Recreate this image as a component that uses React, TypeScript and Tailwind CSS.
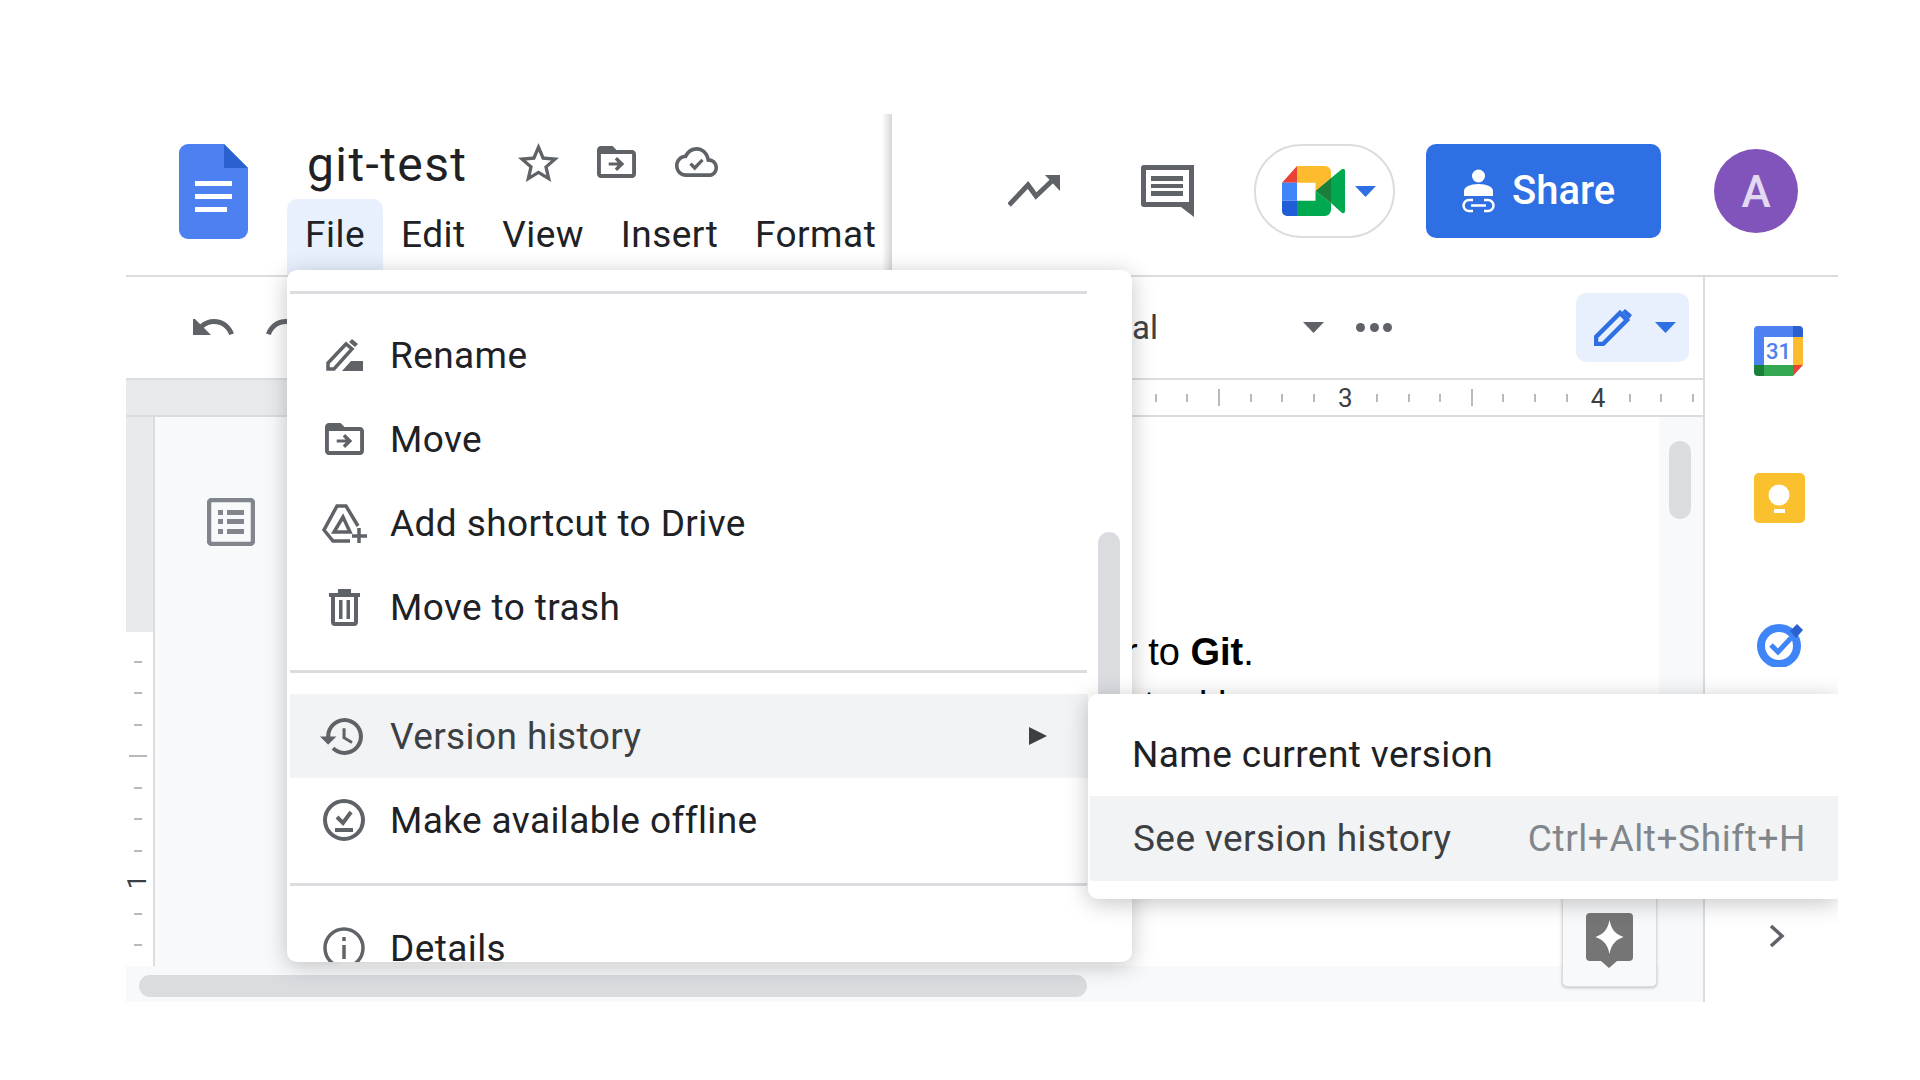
import React from "react";

const TICKS = [0, 0, 1, 0, 0, 0, "3", 0, 0, 0, 1, 0, 0, 0, "4", 0, 0, 0];
const SIDE_TICKS = [0, 0, 0, 1, 0, 0, 0, "1", 0, 0];
const MENUS = ["Edit", "View", "Insert", "Format"];

const grey = "#5f6368";

const MoveIcon = ({ className }: { className: string }) => (
  <svg viewBox="2 4 20 16" className={className} preserveAspectRatio="none" fill={grey}>
    <path d="M20 6h-8l-2-2H4c-1.1 0-2 .9-2 2v12c0 1.1.9 2 2 2h16c1.1 0 2-.9 2-2V8c0-1.1-.9-2-2-2zm0 12H4V8h16v10z" />
    <path d="M8 12.2h4.600l-1.500-1.500 1.200-1.200 3.700 3.500-3.700 3.500-1.200-1.200 1.500-1.500H8z" />
  </svg>
);

const DocsLogo = () => (
  <svg viewBox="0 0 69 95" className="w-[69px] h-[95px] shrink-0">
    <path d="M9 0H45L69 24V86a9 9 0 0 1-9 9H9a9 9 0 0 1-9-9V9a9 9 0 0 1 9-9z" fill="#4d80f0" />
    <path d="M45 0L69 24H45z" fill="#2a60d0" />
    <path d="M16 37h37v5H16zM16 50h37v5H16zM16 63h32v5H16z" fill="#fff" />
  </svg>
);

const MeetLogo = () => (
  <svg viewBox="0 0 63 50" className="w-[63px] h-[50px]">
    <path d="M15 0V16.700H0z" fill="#ea4335" />
    <path d="M0 16.700H15V34.700H0z" fill="#3f85f8" />
    <path d="M0 34.700H15V50H5a5 5 0 0 1-5-5z" fill="#1f5ed8" />
    <path d="M15 0H43a6 6 0 0 1 6 6V12L33.500 25V16.700H15z" fill="#fdbb2d" />
    <path d="M15 34.700H33.500V25L49 37V44a6 6 0 0 1-6 6H15z" fill="#00a94f" />
    <path d="M33.500 25L49 12V37z" fill="#188038" />
    <path d="M49 12L59.500 3.500a2 2 0 0 1 3.500 1.500V45a2 2 0 0 1-3.500 1.500L49 37z" fill="#00a94f" />
  </svg>
);

const Caret = ({ color }: { color: string }) => (
  <svg viewBox="0 0 21 11" className="w-[21px] h-[11px] shrink-0">
    <path d="M0 0H21L10.500 11z" fill={color} />
  </svg>
);

const ShareIcon = () => (
  <svg viewBox="0 0 35 45" className="w-[35px] h-[45px] shrink-0" fill="#fff">
    <circle cx="17.500" cy="7" r="6.500" />
    <path d="M3 27V22c0-4 6-7 14.500-7S32 18 32 22v5z" />
    <path
      d="M12 31H8a5.500 5.500 0 0 0 0 11h4M23 31h4a5.500 5.500 0 0 1 0 11h-4M10 36.500h15"
      fill="none"
      stroke="#fff"
      strokeWidth="2.500"
    />
  </svg>
);

const MenuRow = ({
  icon,
  label,
  active,
}: {
  icon: React.ReactNode;
  label: string;
  active?: boolean;
}) => (
  <div className={`h-[84px] flex items-center relative ${active ? "bg-[#f1f3f4]" : ""}`}>
    <div className="w-[100px] flex justify-center pl-[8px] shrink-0">{icon}</div>
    <span className={`text-[37px] leading-none tracking-[0.4px] ${active ? "text-[#3c4043]" : "text-[#202124]"}`}>
      {label}
    </span>
    {active && (
      <svg viewBox="0 0 18 18" className="absolute left-[739px] w-[18px] h-[18px]">
        <path d="M0 0L18 9 0 18z" fill="#3c4043" />
      </svg>
    )}
  </div>
);

const Separator = () => <div className="h-[3px] bg-[#dadce0] mr-[1px]" />;

const FileMenu = () => (
  <div className="absolute left-[161px] top-[156px] w-[845px] h-[692px] bg-white rounded-[10px] overflow-hidden shadow-[0_4px_22px_rgba(60,64,67,0.3)] z-20">
    <div className="w-[801px] pl-[3px] pt-[21px]">
      <Separator />
      <div className="pt-[19px] pb-[21px]">
        <MenuRow
          label="Rename"
          icon={
            <svg viewBox="0 0 37 32" className="w-[37px] h-[32px]">
              <path d="M2 30V24L20 5l6 5L8 30z" fill="none" stroke={grey} strokeWidth="3.500" />
              <path d="M23 3l3-3 6 5-3 3zM16 32l9-10h12v10z" fill={grey} />
            </svg>
          }
        />
        <MenuRow label="Move" icon={<MoveIcon className="w-[39px] h-[32px]" />} />
        <MenuRow
          label="Add shortcut to Drive"
          icon={
            <svg viewBox="0 0 45 39" className="w-[45px] h-[39px]" fill="none" stroke={grey} strokeWidth="3.500">
              <path d="M28 37H11L2 26 15 2H24L36 22" />
              <path d="M21 13L12 28H28z" />
              <path d="M37 24V39M30 32H45" />
            </svg>
          }
        />
        <MenuRow
          label="Move to trash"
          icon={
            <svg viewBox="0 0 31 37" className="w-[31px] h-[37px]" fill={grey}>
              <path d="M0 4H9V0H22V4H31V8H0z" />
              <path d="M4 8V33a2 2 0 0 0 2 2H25a2 2 0 0 0 2-2V8" fill="none" stroke={grey} strokeWidth="4" />
              <path d="M10 11h3.500v19H10zM17.500 11H21v19h-3.500z" />
            </svg>
          }
        />
      </div>
      <Separator />
      <div className="pt-[21px] pb-[21px]">
        <MenuRow
          active
          label="Version history"
          icon={
            <svg viewBox="1 3 21 18" className="w-[43px] h-[37px] mr-[5px]" fill={grey} preserveAspectRatio="none">
              <path d="M13 3c-4.970 0-9 4.030-9 9H1l3.890 3.890.07.14L9 12H6c0-3.870 3.130-7 7-7s7 3.130 7 7-3.130 7-7 7c-1.930 0-3.680-.79-4.940-2.060l-1.420 1.420C8.270 19.990 10.510 21 13 21c4.970 0 9-4.030 9-9s-4.030-9-9-9zm-1 5v5l4.280 2.540.72-1.210-3.500-2.080V8H12z" />
            </svg>
          }
        />
        <MenuRow
          label="Make available offline"
          icon={
            <svg viewBox="0 0 42 42" className="w-[42px] h-[42px]" fill="none" stroke={grey} strokeWidth="4">
              <circle cx="21" cy="21" r="19" />
              <path d="M14 18l6 6 8-11" />
              <path d="M12 31H30" />
            </svg>
          }
        />
      </div>
      <Separator />
      <div className="pt-[20px]">
        <MenuRow
          label="Details"
          icon={
            <svg viewBox="0 0 42 42" className="w-[42px] h-[42px]" fill="none" stroke={grey} strokeWidth="3.500">
              <circle cx="21" cy="21" r="19" />
              <path d="M21 18V32M21 10V14" />
            </svg>
          }
        />
      </div>
    </div>
    <div className="absolute left-[811px] top-[262px] w-[22px] h-[240px] rounded-full bg-[#dadce0]" />
  </div>
);

const VersionSubmenu = () => (
  <div className="absolute left-[962px] top-[580px] right-0 h-[205px] bg-white rounded-l-[10px] shadow-[0_4px_22px_rgba(60,64,67,0.3)] z-30 pl-[2px] py-[18px]">
    <div className="h-[84px] flex items-center pl-[42px]">
      <span className="text-[37px] leading-none tracking-[0.4px] text-[#202124]">Name current version</span>
    </div>
    <div className="h-[85px] flex items-center justify-between pl-[43px] pr-[32px] bg-[#f1f3f4]">
      <span className="text-[37px] leading-none tracking-[0.4px] text-[#3c4043]">See version history</span>
      <span className="text-[37px] leading-none tracking-[0.6px] text-[#80868b]">Ctrl+Alt+Shift+H</span>
    </div>
  </div>
);

export default function App() {
  return (
    <div className="w-[1920px] h-[1080px] bg-white pt-[114px] pl-[126px] overflow-hidden font-['Roboto',sans-serif]">
      <div className="relative w-[1712px] h-[888px] overflow-hidden flex flex-col bg-white">
        {/* header */}
        <div className="h-[163px] shrink-0 flex border-b-2 border-[#dadce0]">
          <div className="w-[766px] shrink-0 flex relative">
            <div className="pl-[53px] pt-[30px]">
              <DocsLogo />
            </div>
            <div className="ml-[39px] flex flex-col">
              <div className="h-[85px] flex items-end pb-[5px]">
                <span className="ml-[20px] text-[48px] leading-[56px] tracking-[1.400px] text-[#202124] w-[211px] -translate-y-[1px]">git-test</span>
                <div className="flex items-center h-[56px] pb-[8px]">
                  <svg viewBox="2 2 20 19" className="w-[41px] h-[39px]" fill={grey}>
                    <path d="M22 9.240l-7.190-.62L12 2 9.190 8.630 2 9.240l5.460 4.730L5.820 21 12 17.270 18.180 21l-1.630-7.030L22 9.240zM12 15.400l-3.760 2.270 1-4.280-3.320-2.880 4.380-.38L12 6.100l1.710 4.040 4.380.38-3.320 2.880 1 4.280L12 15.400z" />
                  </svg>
                  <MoveIcon className="ml-[38px] w-[39px] h-[32px]" />
                  <svg viewBox="0 4 24 16" className="ml-[39px] w-[43px] h-[30px]" fill={grey} preserveAspectRatio="none">
                    <path d="M19.350 10.040C18.670 6.590 15.640 4 12 4 9.110 4 6.600 5.640 5.350 8.040 2.340 8.360 0 10.910 0 14c0 3.310 2.690 6 6 6h13c2.760 0 5-2.240 5-5 0-2.640-2.050-4.780-4.650-4.960zM19 18H6c-2.210 0-4-1.790-4-4 0-2.050 1.530-3.760 3.560-3.970l1.070-.11.5-.95C8.080 7.140 9.940 6 12 6c2.620 0 4.880 1.860 5.390 4.430l.3 1.500 1.530.11c1.560.1 2.780 1.410 2.780 2.960 0 1.650-1.350 3-3 3z" />
                    <path d="M11 16.500l-3-3 1.300-1.300 1.700 1.700 3.700-3.700 1.300 1.300z" />
                  </svg>
                </div>
              </div>
              <div className="flex h-[76px]">
                <div className="w-[96px] bg-[#e8f0fe] rounded-t-[10px] pl-[18px] pt-[17px] text-[37px] leading-none tracking-[0.5px] text-[#202124]">
                  File
                </div>
                {MENUS.map((m) => (
                  <div key={m} className="pl-[18px] pr-[18.500px] pt-[17px] text-[37px] leading-none tracking-[0.5px] text-[#202124]">
                    {m}
                  </div>
                ))}
              </div>
            </div>
            <div className="absolute right-0 top-0 bottom-0 w-[10px] bg-gradient-to-r from-transparent to-[#d4d6da]" />
          </div>
          <div className="flex items-center pb-[7px]">
            <svg viewBox="0 0 52 32" className="ml-[116px] w-[52px] h-[32px] shrink-0">
              <path d="M1 30L20 10l8 11L47 3" fill="none" stroke={grey} strokeWidth="5" />
              <path d="M37 0H52V16z" fill={grey} />
            </svg>
            <svg viewBox="0 0 53 52" className="ml-[81px] w-[53px] h-[52px] shrink-0">
              <path d="M3 0H53V52L40 42H3a3 3 0 0 1-3-3V3a3 3 0 0 1 3-3z" fill={grey} />
              <path d="M5 5H48V37H5z" fill="#fff" />
              <path d="M10 11H42V16H10zM10 19H42V23H10zM10 26H42V31H10z" fill={grey} />
            </svg>
            <div className="ml-[60px] w-[141px] h-[94px] shrink-0 rounded-full border-2 border-[#dadce0] flex items-center pl-[26px] gap-[10px]">
              <MeetLogo />
              <Caret color="#2f6fe4" />
            </div>
            <div className="ml-[31px] w-[235px] h-[94px] shrink-0 rounded-[10px] bg-[#2f6fe4] flex items-center pl-[35px] gap-[16px]">
              <ShareIcon />
              <span className="text-[40px] leading-none font-medium text-white">Share</span>
            </div>
            <div className="ml-[53px] w-[84px] h-[84px] shrink-0 rounded-full bg-[#8154bb] flex items-center justify-center text-[44px] leading-none font-medium text-[#e3d9f1] pt-[2px]">
              A
            </div>
          </div>
        </div>

        {/* body */}
        <div className="flex-1 flex min-h-0">
          <div className="w-[1577px] shrink-0 flex flex-col">
            {/* toolbar */}
            <div className="h-[103px] shrink-0 border-b-2 border-[#dadce0] flex items-center">
              <svg viewBox="2 8 21 9" className="ml-[67px] w-[42px] h-[18px] shrink-0" fill={grey} preserveAspectRatio="none">
                <path d="M12.500 8c-2.650 0-5.050.99-6.900 2.600L2 7v9h9l-3.620-3.620c1.390-1.160 3.160-1.880 5.120-1.880 3.540 0 6.550 2.310 7.600 5.500l2.370-.78C21.080 11.030 17.150 8 12.500 8z" />
              </svg>
              <svg viewBox="2 8 21 9" className="ml-[30px] w-[42px] h-[18px] shrink-0 -scale-x-100" fill={grey} preserveAspectRatio="none">
                <path d="M12.500 8c-2.650 0-5.050.99-6.900 2.600L2 7v9h9l-3.620-3.620c1.390-1.160 3.160-1.880 5.120-1.880 3.540 0 6.550 2.310 7.600 5.500l2.370-.78C21.080 11.030 17.150 8 12.500 8z" />
              </svg>
              <span className="ml-[825px] w-[171px] shrink-0 text-[33px] leading-none text-[#3c4043] pb-[1px]">al</span>
              <Caret color={grey} />
              <div className="ml-[32px] w-[36px] flex justify-between shrink-0">
                <div className="w-[9px] h-[9px] rounded-full bg-[#5f6368]" />
                <div className="w-[9px] h-[9px] rounded-full bg-[#5f6368]" />
                <div className="w-[9px] h-[9px] rounded-full bg-[#5f6368]" />
              </div>
              <div className="ml-[184px] w-[113px] h-[69px] shrink-0 rounded-[10px] bg-[#e8f0fe] flex items-center pl-[18px]">
                <svg viewBox="0 0 38 37" className="w-[38px] h-[37px] shrink-0">
                  <path d="M2 35V28L26 4l7 7L9 35z" fill="none" stroke="#2f6fe4" strokeWidth="4.500" />
                  <path d="M28 3l3-3 7 6-3 4z" fill="#2f6fe4" />
                </svg>
                <div className="ml-[23px]">
                  <Caret color="#2f6fe4" />
                </div>
              </div>
            </div>
            {/* ruler */}
            <div className="h-[37px] shrink-0 border-b-2 border-[#dadce0] flex">
              <div className="w-[1006px] shrink-0 bg-[#e8eaed]" />
              <div className="pl-[8px] flex items-center">
                {TICKS.map((t, i) => (
                  <div key={i} className="w-[31.600px] flex justify-center">
                    {typeof t === "string" ? (
                      <span className="text-[26px] leading-none text-[#3c4043]">{t}</span>
                    ) : (
                      <div className={`w-[2px] bg-[#b6b9bd] ${t ? "h-[17px]" : "h-[8px]"}`} />
                    )}
                  </div>
                ))}
              </div>
            </div>
            {/* document */}
            <div className="flex-1 flex min-h-0">
              <div className="w-[29px] shrink-0 border-r-2 border-[#dadce0] flex flex-col">
                <div className="h-[215px] shrink-0 bg-[#e8eaed]" />
                <div className="pt-[14px] pr-[4px] flex flex-col items-center">
                  {SIDE_TICKS.map((t, i) => (
                    <div key={i} className="h-[31.500px] flex items-center justify-center shrink-0">
                      {typeof t === "string" ? (
                        <span className="text-[26px] leading-none text-[#3c4043] -rotate-90">{t}</span>
                      ) : (
                        <div className={`h-[2px] bg-[#b6b9bd] ${t ? "w-[18px]" : "w-[8px]"}`} />
                      )}
                    </div>
                  ))}
                </div>
              </div>
              <div className="w-[185px] shrink-0 bg-[#f8f9fa] pl-[52px] pt-[81px]">
                <svg viewBox="0 0 48 48" className="w-[48px] h-[48px]">
                  <rect x="2" y="2" width="44" height="44" rx="3" fill="none" stroke="#80868b" strokeWidth="4.500" />
                  <path d="M11 12h5v5h-5zM20 12h17v5H20zM11 21h5v5h-5zM20 21h17v5H20zM11 31h5v5h-5zM20 31h17v5H20z" fill="#80868b" />
                </svg>
              </div>
              <div className="flex-1 bg-white pl-[785px] pt-[209px] font-['Liberation_Sans',sans-serif] text-[38px] leading-[53px] text-black whitespace-nowrap overflow-hidden">
                <div>
                  r to <b>Git</b>.
                </div>
                <div>l to d l</div>
              </div>
              <div className="w-[44px] shrink-0 bg-[#f8f9fa] pl-[10px] pt-[24px]">
                <div className="w-[22px] h-[78px] rounded-full bg-[#dadce0]" />
              </div>
            </div>
            {/* bottom scrollbar */}
            <div className="h-[36px] shrink-0 bg-[#f8f9fa] pl-[13px] pt-[9px]">
              <div className="w-[948px] h-[22px] rounded-full bg-[#dadce0]" />
            </div>
          </div>

          {/* side panel */}
          <div className="flex-1 border-l-2 border-[#dadce0] flex flex-col pl-[49px] pt-[49px]">
            <svg viewBox="0 0 49 50" className="w-[49px] h-[50px] shrink-0">
              <path d="M4 0H39V11H10V39H0V4a4 4 0 0 1 4-4z" fill="#4d80f0" />
              <path d="M39 0h6a4 4 0 0 1 4 4V11H39z" fill="#2a60d0" />
              <path d="M39 11H49V39H39z" fill="#fdbb2d" />
              <path d="M10 39H39V50H10z" fill="#34a853" />
              <path d="M0 39H10V50H4a4 4 0 0 1-4-4z" fill="#188038" />
              <path d="M39 39H49L39 50z" fill="#ea4335" />
              <text x="24.500" y="33" textAnchor="middle" fontSize="22" fontFamily="Roboto" fontWeight="500" fill="#4d80f0">
                31
              </text>
            </svg>
            <svg viewBox="0 0 51 50" className="mt-[97px] w-[51px] h-[50px] shrink-0">
              <rect width="51" height="50" rx="5" fill="#fbc02d" />
              <circle cx="25" cy="22" r="10.500" fill="#fff" />
              <path d="M20 36H31V40H20z" fill="#fff" />
            </svg>
            <svg viewBox="0 0 47 44" className="mt-[100px] ml-[3px] w-[47px] h-[44px] shrink-0">
              <circle cx="22" cy="23" r="18" fill="none" stroke="#3f85f8" strokeWidth="8" />
              <path d="M14 22l7 7 13-14" fill="none" stroke="#3f85f8" strokeWidth="5" />
              <path d="M33 8l7-7 6 6-7 8z" fill="#2a60d0" />
            </svg>
            <svg viewBox="0 0 16 24" className="mt-[257px] ml-[15px] w-[16px] h-[24px] shrink-0">
              <path d="M2 2l11 10L2 22" fill="none" stroke={grey} strokeWidth="3.500" />
            </svg>
          </div>
        </div>

        {/* comment bubble */}
        <div className="absolute left-[1436px] top-[770px] w-[95px] h-[103px] bg-[#f8f9fa] border border-[#dadce0] rounded-b-[5px] shadow-[0_1px_3px_rgba(60,64,67,0.3)] z-10 flex justify-center pt-[28px]">
          <svg viewBox="0 0 47 55" className="w-[47px] h-[55px]">
            <path d="M4 0H43a4 4 0 0 1 4 4V44a4 4 0 0 1-4 4H31l-8 7-8-7H4a4 4 0 0 1-4-4V4a4 4 0 0 1 4-4z" fill="#757575" />
            <path d="M23.500 7c2 10 6 14 14 17-8 3-12 7-14 17-2-10-6-14-14-17 8-3 12-7 14-17z" fill="#fff" />
          </svg>
        </div>

        <FileMenu />
        <VersionSubmenu />
      </div>
    </div>
  );
}
